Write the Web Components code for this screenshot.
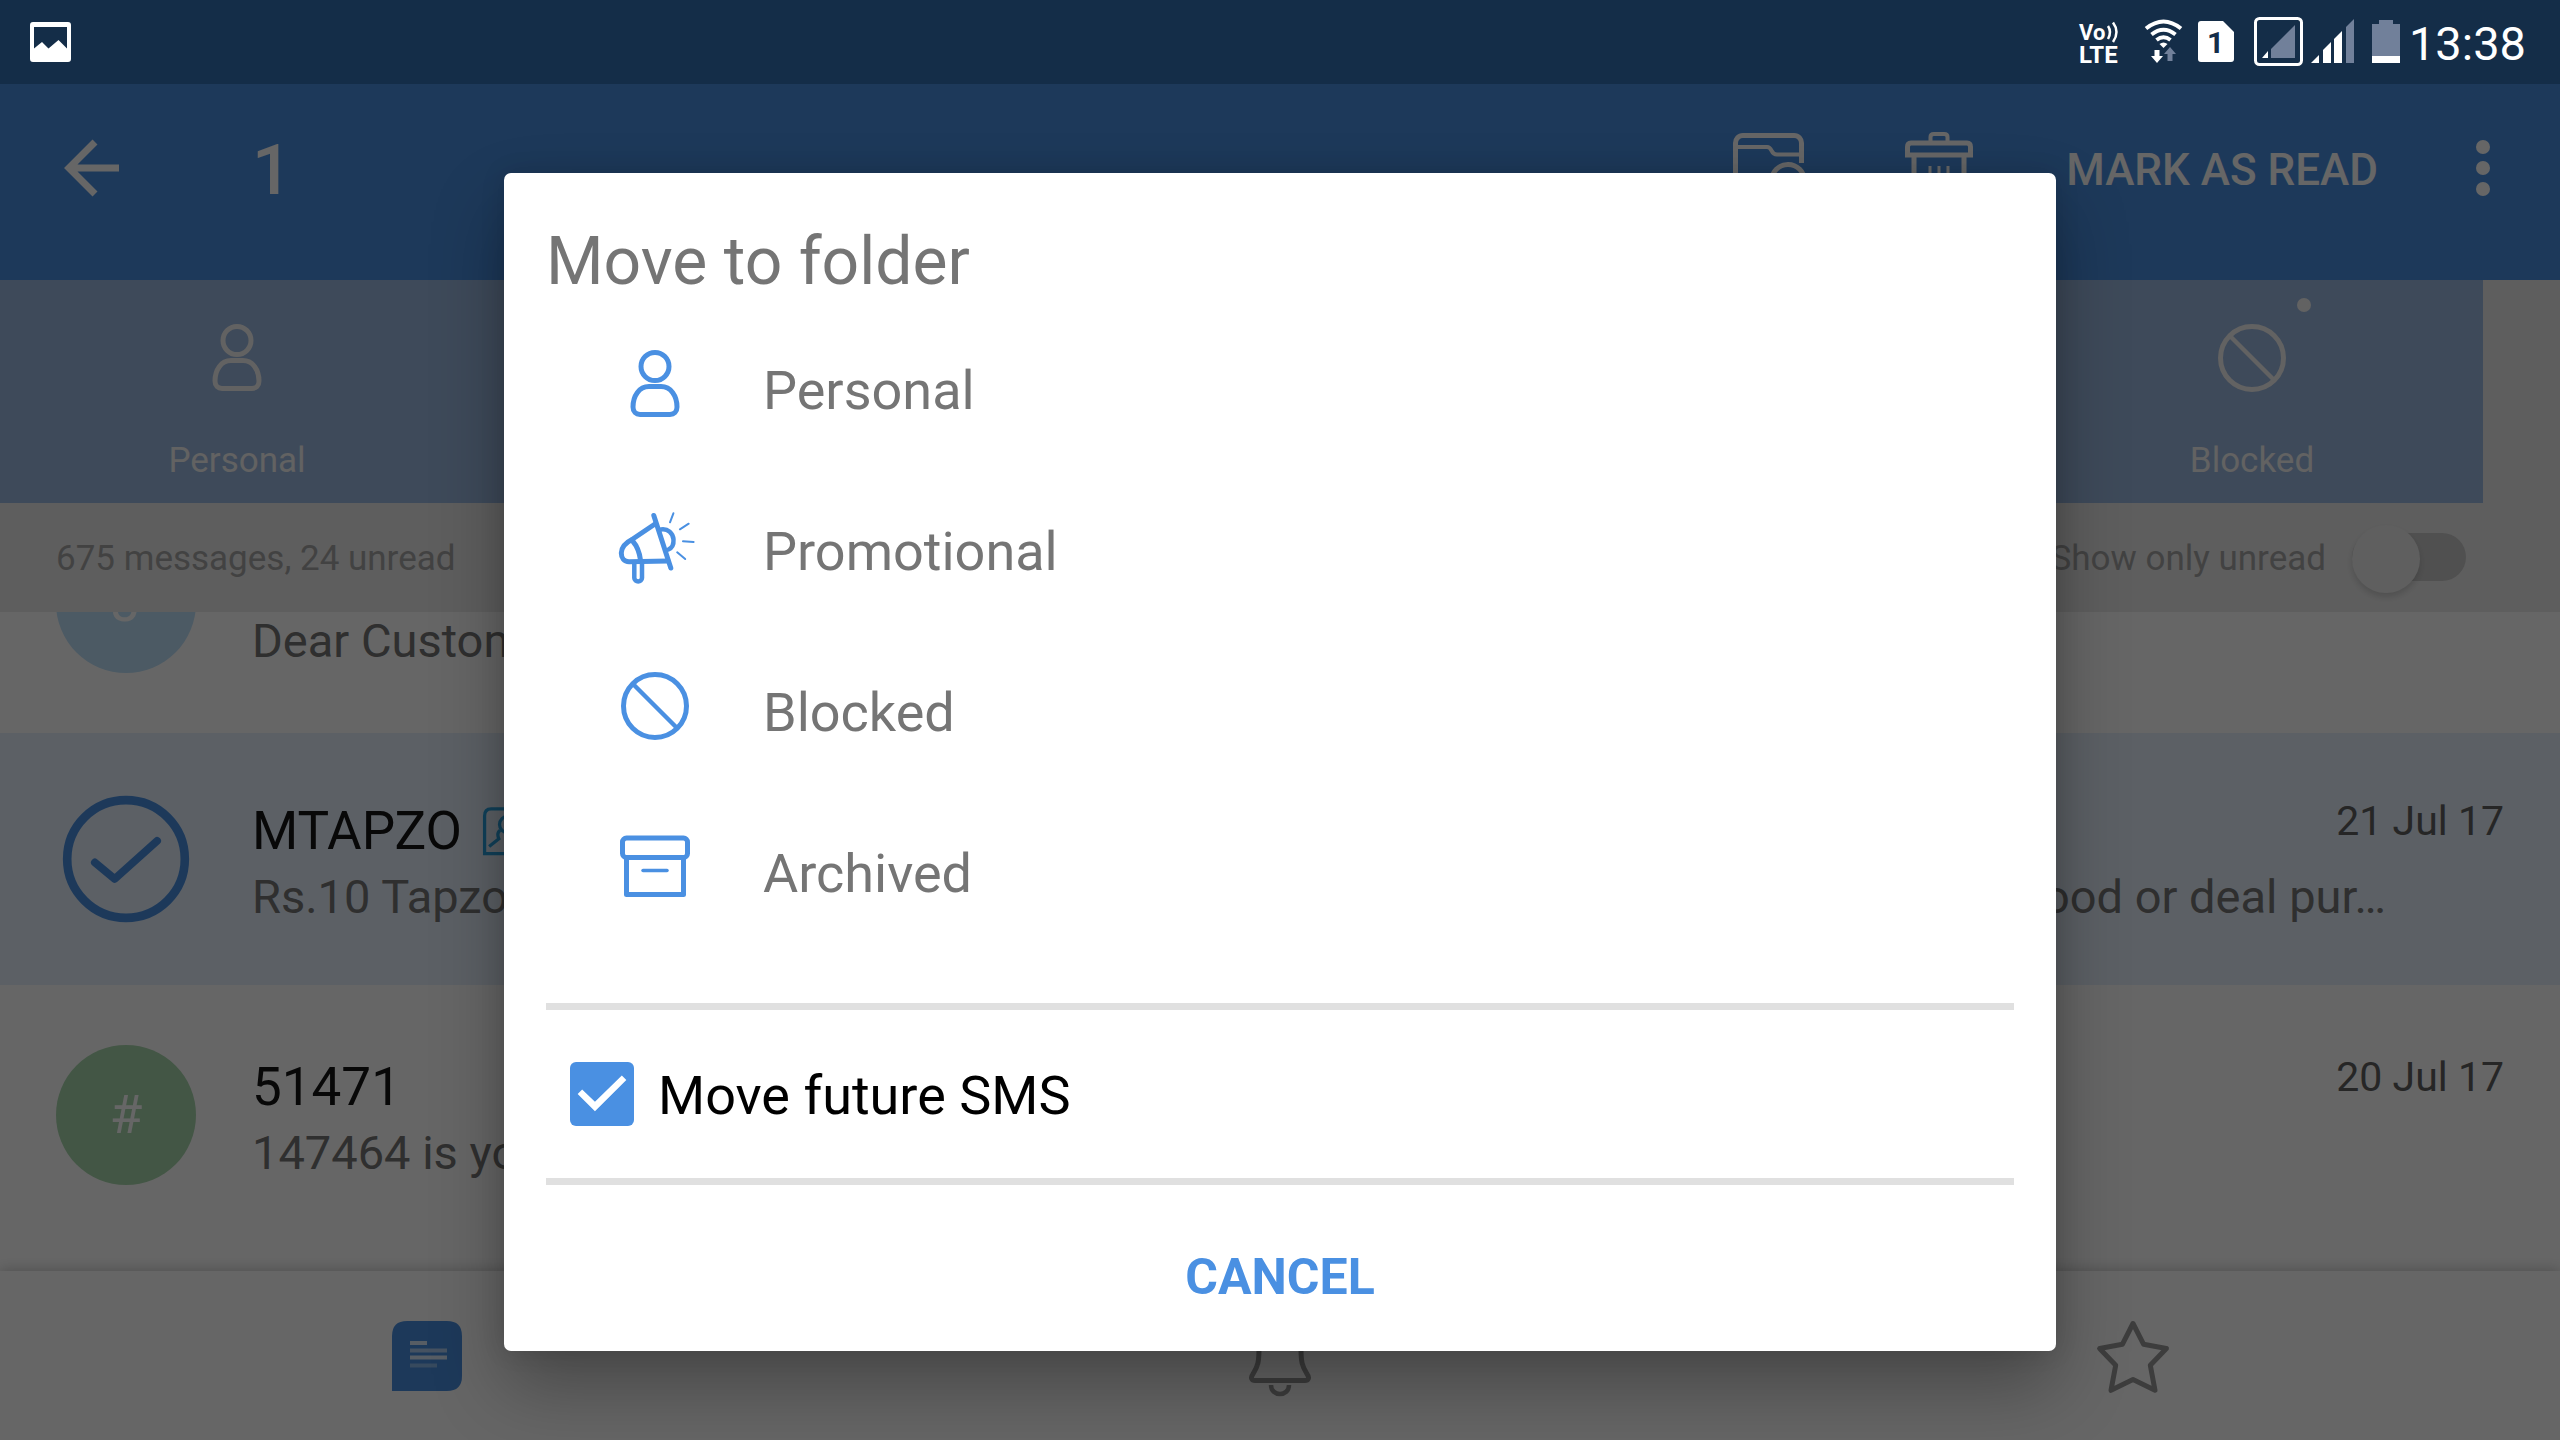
<!DOCTYPE html>
<html lang="en">
<head>
<meta charset="utf-8">
<meta name="viewport" content="width=device-width, initial-scale=1">
<title>Messages</title>
<style>
    html, body {
        height: 100%;
        margin: 0;
    }

    body {
        display: flex;
        flex-direction: column;
        overflow: hidden;
        background: #fff;
        font-family: Roboto, sans-serif;
        --blue: #4a90e2;
        --grey: #757575;
    }
</style>
</head>
<body>
    <status-bar time="13:38"></status-bar>
    <sms-app>
        <selection-bar count="1"></selection-bar>
        <category-tabs>
            <category-tab icon="person">Personal</category-tab>
            <category-tab icon="blocked" unread>Blocked</category-tab>
        </category-tabs>
        <filter-bar>675 messages, 24 unread</filter-bar>
        <message-list>
            <message-row avatar="J" color="#bee1fa">
                <span slot="preview">Dear Customer</span>
            </message-row>
            <message-row selected contact>
                <span slot="name">MTAPZO</span>
                <time slot="date">21 Jul 17</time>
                <span slot="preview">Rs.10 Tapzo</span>
                <span slot="preview">food or deal pur…</span>
            </message-row>
            <message-row avatar="#" color="#a8d7ad">
                <span slot="name">51471</span>
                <time slot="date">20 Jul 17</time>
                <span slot="preview">147464 is your</span>
            </message-row>
        </message-list>
        <bottom-nav></bottom-nav>
        <folder-dialog slot="dialog">
            <span slot="title">Move to folder</span>
            <folder-option icon="person">Personal</folder-option>
            <folder-option icon="megaphone">Promotional</folder-option>
            <folder-option icon="blocked">Blocked</folder-option>
            <folder-option icon="archive">Archived</folder-option>
        </folder-dialog>
    </sms-app>

<script>
/**
 * Icon drawings, each on a 74 x 74 canvas.
 */
const ICONS = {
    back: '<path d="M65 37H16M41 11L15 37L41 63" stroke-width="7"/>',
    person: `
        <circle cx="37" cy="19.5" r="14"/>
        <path d="M31 39.6H43C53 39.6 59 49 59 60C59 65 56 67.4 52 67.4H22C18 67.4 15 65 15 60C15 49 21 39.6 31 39.6Z"/>`,
    blocked: '<circle cx="37" cy="37" r="31.5"/><path d="M15 15L59 59" stroke-width="4.5"/>',
    archive: `
        <rect x="4.5" y="8" width="65" height="19.5" rx="4"/>
        <path d="M8.5 28V64.5H65.5V28" stroke-linejoin="round"/>
        <path d="M25 40.5H49" stroke-width="3.5" stroke-linecap="round"/>`,
    megaphone: `
        <g stroke-linecap="round" stroke-linejoin="round">
            <path d="M35.8 7.5L52.8 60"/>
            <path d="M37 16L14 31.5C7 35 3.5 40 3.3 45C3.3 50 6 53.7 11 53.7L50 53"/>
            <path d="M15 33.5C19 38 21.5 45 22.5 52"/>
            <path d="M16.3 55V70C16.3 74.5 24 74.5 24 70V55" stroke-width="4.5"/>
            <path d="M43 21.5C50 20.5 55 25 55.5 31.5C55.8 36 54 40 50.4 41.5" stroke-width="4.5"/>
            <path d="M55.4 5.3L52 14.3M70.7 15.7L61.9 21.3M65 33.3L75.6 34M59.2 44.3L67.2 51" stroke-width="2"/>
        </g>`,
    folder: `
        <path d="M3.5 74V12C3.5 8 6.5 4.5 11 4.5H62C66.5 4.5 69.5 8 69.5 12V32"/>
        <path d="M4 16H35C41 16 38 23.5 45 23.5H69" stroke-width="4"/>
        <circle cx="56" cy="50" r="16.5"/>`,
    trash: `
        <path d="M28.5 12V6Q28.5 3 32 3H42Q45.5 3 45.5 6V12" stroke-width="4"/>
        <path d="M9 12H65Q68.5 12 68.5 16V24H5.5V16Q5.5 12 9 12Z"/>
        <path d="M12 24V64Q12 70 18 70H56Q62 70 62 64V24"/>
        <path d="M28 35V58M37 35V58M46 35V58" stroke-width="3"/>`,
    check: `
        <circle cx="37" cy="37" r="34" stroke-width="5"/>
        <path d="M19 39L30.5 48.5L55 26.5" stroke-width="4.5" stroke-linecap="round" stroke-linejoin="round"/>`,
    contact: `
        <path d="M4 72V14Q4 3 14 3H72V72Z"/>
        <circle cx="40" cy="27" r="13"/>
        <path d="M11 61L26 49Q22 40 28 36M69 61L54 49Q58 40 52 36"/>`,
    messages: `
        <path d="M2 72V17Q2 2 17 2H57Q72 2 72 17V57Q72 72 57 72Z" fill="currentColor" stroke="none"/>
        <g stroke="#fff" stroke-width="4" opacity=".8">
            <path d="M20 24H37M20 38.5H57"/>
            <path d="M20 31.5H57" opacity=".7"/>
            <path d="M20 46.5H47" opacity=".45"/>
        </g>`,
    bell: `
        <path d="M37 5C23 5 16 15 16 29C16 43 15 47 10 55C7 59 9 61.5 12 61.5H62C65 61.5 67 59 64 55C59 47 58 43 58 29C58 15 51 5 37 5Z"/>
        <path d="M28 66C28 78 46 78 46 66" stroke-width="4.5"/>`,
    star: `
        <path stroke-linejoin="round" d="M37 4.5L47.5 25.2L70.4 29.5L54.3 46.3L59 71.3L37 60.6L15 71.3L19.7 46.3L3.6 29.5L26.5 25.2Z"/>`
};

/**
 * Icon that takes its colour from the text colour.
 */
customElements.define('app-icon', class AppIcon extends HTMLElement {
    constructor() {
        super();
        this.attachShadow({ mode: 'open' });
    }

    connectedCallback() {
        this.shadowRoot.innerHTML = `
            <style>
                :host {
                    display: block;
                    flex: none;
                    width: var(--icon-size, 74px);
                    height: var(--icon-size, 74px);
                }
                svg {
                    display: block;
                    width: 100%;
                    height: 100%;
                    overflow: visible;
                    fill: none;
                    stroke: currentColor;
                    stroke-width: 5;
                }
            </style>
            <svg viewBox="0 0 74 74" aria-hidden="true">${ICONS[this.getAttribute('name')]}</svg>
        `;
    }
});

/**
 * System bar with the notification and signal icons and the clock.
 */
customElements.define('status-bar', class StatusBar extends HTMLElement {
    constructor() {
        super();
        this.attachShadow({ mode: 'open' });
    }

    connectedCallback() {
        this.shadowRoot.innerHTML = `
            <style>
                :host {
                    display: flex;
                    flex: none;
                    align-items: center;
                    height: 84px;
                    padding: 0 34px 0 30px;
                    background: #142d48;
                    color: #fff;
                }
                svg {
                    display: block;
                    height: 84px;
                    fill: currentColor;
                }
                .right {
                    display: flex;
                    align-items: center;
                    margin-left: auto;
                }
                text {
                    font-weight: 700;
                }
                .dim {
                    fill: #71809a;
                }
                .line {
                    fill: none;
                    stroke: currentColor;
                }
                time {
                    padding-top: 4px;
                    font-size: 47px;
                    line-height: 64px;
                }
            </style>
            <svg width="42" viewBox="0 0 42 84">
                <path fill-rule="evenodd" d="M3 22H38Q41 22 41 25V59Q41 62 38 62H3Q0 62 0 59V25Q0 22 3 22ZM4 27V48.5L12 42L18.5 48.5L28.5 40L37 48.5V27Z"/>
            </svg>
            <div class="right">
                <svg width="60" viewBox="0 0 60 84">
                    <text x="6" y="40" font-size="22">Vo</text>
                    <text x="6" y="63" font-size="24">LTE</text>
                    <path class="line" stroke-width="2.5" d="M35 26Q39 32 35 39M40 22.5Q47 32 40 42"/>
                </svg>
                <svg width="60" viewBox="0 0 60 84">
                    <g class="line" stroke-width="4">
                        <path d="M13 28.5Q30.5 14.5 48 28.5"/>
                        <path d="M18.5 34.5Q30.5 25 42.5 34.5"/>
                        <path d="M23.5 40Q30.5 34.5 37.5 40"/>
                    </g>
                    <path d="M26.5 44Q30.5 41 34.5 44L30.5 48Z"/>
                    <path d="M21.5 50H26.5V56H30L24 63L18 56H21.5Z"/>
                    <path class="dim" d="M34.5 61H39.5V54H43L37 47L31 54H34.5Z"/>
                </svg>
                <svg width="50" viewBox="0 0 50 84">
                    <path d="M8 21H30L41 32V59Q41 62 38 62H8Q5 62 5 59V24Q5 21 8 21Z"/>
                    <text x="14" y="53" font-size="30" fill="#142d48">1</text>
                </svg>
                <svg width="64" viewBox="0 0 64 84">
                    <rect class="line" stroke-width="3" x="12.5" y="18.5" width="46" height="46" rx="4"/>
                    <path d="M19 58L25 51V58Z"/>
                    <path class="dim" d="M28 58V49L52 25V58Z"/>
                </svg>
                <svg width="56" viewBox="0 0 56 84">
                    <path d="M4 63L12 55V63ZM16 63V50L24 42V63ZM27 63V39L35 31V63Z"/>
                    <path class="dim" d="M39 63V27L47 19V63Z"/>
                </svg>
                <svg width="46" viewBox="0 0 46 84">
                    <path class="dim" d="M9 24H16V20H30V24H37V56H9Z"/>
                    <path d="M9 56H37V63H9Z"/>
                </svg>
                <time>${this.getAttribute('time')}</time>
            </div>
        `;
    }
});

/**
 * Application screen: the page content and the dimmed layer that holds a dialog.
 */
customElements.define('sms-app', class SmsApp extends HTMLElement {
    constructor() {
        super();
        this.attachShadow({ mode: 'open' });
        this.shadowRoot.innerHTML = `
            <style>
                :host {
                    display: flex;
                    flex: 1;
                    flex-direction: column;
                    min-height: 0;
                    position: relative;
                }
                .scrim {
                    position: absolute;
                    inset: 0;
                    display: flex;
                    align-items: center;
                    justify-content: center;
                    overflow: hidden;
                    background: rgba(0, 0, 0, .6);
                }
            </style>
            <slot></slot>
            <div class="scrim"><slot name="dialog"></slot></div>
        `;
    }
});

/**
 * Top bar shown while messages are selected.
 */
customElements.define('selection-bar', class SelectionBar extends HTMLElement {
    constructor() {
        super();
        this.attachShadow({ mode: 'open' });
    }

    connectedCallback() {
        this.shadowRoot.innerHTML = `
            <style>
                :host {
                    display: flex;
                    flex: none;
                    align-items: center;
                    height: 168px;
                    padding: 0 70px 28px 54px;
                    background: var(--blue);
                    color: #fff;
                }
                button {
                    display: block;
                    padding: 0;
                    border: 0;
                    background: none;
                    color: inherit;
                }
                .count {
                    margin-left: 124px;
                    padding-top: 4px;
                    font-size: 70px;
                    font-weight: 500;
                    line-height: 80px;
                }
                .icons {
                    display: flex;
                    gap: 96px;
                    margin-left: auto;
                }
                .read {
                    margin: 0 98px 0 90px;
                    padding-top: 4px;
                    font: 500 44px/52px Roboto, sans-serif;
                }
                .more {
                    display: grid;
                    gap: 7px;
                }
                .more i {
                    width: 14px;
                    height: 14px;
                    border-radius: 50%;
                    background: currentColor;
                }
            </style>
            <button aria-label="Back"><app-icon name="back"></app-icon></button>
            <span class="count">${this.getAttribute('count')}</span>
            <div class="icons">
                <button aria-label="Move"><app-icon name="folder"></app-icon></button>
                <button aria-label="Delete"><app-icon name="trash"></app-icon></button>
            </div>
            <button class="read">MARK AS READ</button>
            <button class="more" aria-label="More"><i></i><i></i><i></i></button>
        `;
    }
});

/**
 * Strip of category tabs.
 */
customElements.define('category-tabs', class CategoryTabs extends HTMLElement {
    constructor() {
        super();
        this.attachShadow({ mode: 'open' });
        this.shadowRoot.innerHTML = `
            <style>
                :host {
                    display: flex;
                    flex: none;
                    padding-right: 77px;
                    background: #ebebeb;
                }
                nav {
                    display: flex;
                    flex: 1;
                    justify-content: space-between;
                    background: #9bb8e0;
                }
                ::slotted(category-tab) {
                    min-width: 462px;
                }
                ::slotted(category-tab:first-child) {
                    min-width: 474px;
                }
            </style>
            <nav><slot></slot></nav>
        `;
    }
});

/**
 * One category tab, with a dot when it has unread messages.
 */
customElements.define('category-tab', class CategoryTab extends HTMLElement {
    constructor() {
        super();
        this.attachShadow({ mode: 'open' });
    }

    connectedCallback() {
        this.shadowRoot.innerHTML = `
            <style>
                :host {
                    display: block;
                }
                a {
                    display: flex;
                    flex-direction: column;
                    align-items: center;
                    gap: 46px;
                    padding: 41px 0 22px;
                    color: #f4f4f4;
                    font-size: 35px;
                    line-height: 40px;
                    text-decoration: none;
                }
                .icon {
                    position: relative;
                }
                .dot {
                    position: absolute;
                    top: -23px;
                    right: -22px;
                    width: 14px;
                    height: 14px;
                    border-radius: 50%;
                    background: currentColor;
                }
            </style>
            <a href="#">
                <span class="icon">
                    <app-icon name="${this.getAttribute('icon')}"></app-icon>
                    ${this.hasAttribute('unread') ? '<i class="dot"></i>' : ''}
                </span>
                <slot></slot>
            </a>
        `;
    }
});

/**
 * Message totals and the unread switch.
 */
customElements.define('filter-bar', class FilterBar extends HTMLElement {
    constructor() {
        super();
        this.attachShadow({ mode: 'open' });
        this.shadowRoot.innerHTML = `
            <style>
                :host {
                    display: flex;
                    flex: none;
                    align-items: center;
                    justify-content: space-between;
                    height: 107px;
                    padding: 2px 94px 0 56px;
                    background: #ebebeb;
                    color: #a6a6a6;
                    font-size: 35px;
                    line-height: 40px;
                }
                label {
                    display: flex;
                    align-items: center;
                    gap: 26px;
                }
                input {
                    appearance: none;
                    position: relative;
                    width: 114px;
                    height: 48px;
                    margin: 0 0 4px;
                    border-radius: 24px;
                    background: #c8c8c8;
                }
                input::before {
                    content: "";
                    position: absolute;
                    top: -8px;
                    left: 0;
                    width: 68px;
                    height: 68px;
                    border-radius: 50%;
                    background: #ededed;
                    box-shadow: 0 4px 6px rgba(0, 0, 0, .15);
                }
                input:checked::before {
                    left: auto;
                    right: 0;
                }
            </style>
            <slot></slot>
            <label>Show only unread <input type="checkbox" role="switch"></label>
        `;
    }
});

/**
 * Scrolled list of messages, resting at its end.
 */
customElements.define('message-list', class MessageList extends HTMLElement {
    constructor() {
        super();
        this.attachShadow({ mode: 'open' });
        this.shadowRoot.innerHTML = `
            <style>
                :host {
                    display: flex;
                    flex: 1;
                    flex-direction: column;
                    justify-content: flex-end;
                    gap: 4px;
                    min-height: 0;
                    padding-bottom: 30px;
                    overflow: hidden;
                    background: #fff;
                }
            </style>
            <slot></slot>
        `;
    }
});

/**
 * Message row with avatar, sender, date and preview.
 */
customElements.define('message-row', class MessageRow extends HTMLElement {
    constructor() {
        super();
        this.attachShadow({ mode: 'open' });
    }

    connectedCallback() {
        const selected = this.hasAttribute('selected');
        this.shadowRoot.innerHTML = `
            <style>
                :host {
                    display: flex;
                    flex: none;
                    align-items: center;
                    gap: 56px;
                    height: 252px;
                    padding: 0 56px;
                    background: #fff;
                }
                :host([selected]) {
                    background: #e5f0fd;
                }
                .avatar {
                    display: grid;
                    flex: none;
                    place-items: center;
                    width: 140px;
                    height: 140px;
                    border-radius: 50%;
                    background: ${this.getAttribute('color') || 'none'};
                    color: #fff;
                    font-size: 53px;
                    line-height: 64px;
                }
                .avatar app-icon {
                    --icon-size: 128px;
                    color: var(--blue);
                }
                .body {
                    flex: 1;
                    min-width: 0;
                    padding-top: 6px;
                }
                .top {
                    display: flex;
                    align-items: center;
                    gap: 20px;
                    height: 70px;
                    color: #141414;
                    font-size: 53px;
                    line-height: 64px;
                }
                .top app-icon {
                    --icon-size: 48px;
                    color: #2ba3e0;
                }
                .date {
                    margin: 0 0 20px auto;
                    color: #606060;
                    font-size: 41px;
                    line-height: 48px;
                }
                .preview {
                    display: flex;
                    justify-content: space-between;
                    margin-right: 118px;
                    color: var(--grey);
                    font-size: 47px;
                    line-height: 62px;
                    white-space: nowrap;
                }
            </style>
            <div class="avatar">${selected ? '<app-icon name="check"></app-icon>' : this.getAttribute('avatar')}</div>
            <div class="body">
                <div class="top">
                    <slot name="name"></slot>
                    ${this.hasAttribute('contact') ? '<app-icon name="contact"></app-icon>' : ''}
                    <span class="date"><slot name="date"></slot></span>
                </div>
                <div class="preview"><slot name="preview"></slot></div>
            </div>
        `;
    }
});

/**
 * Bottom navigation.
 */
customElements.define('bottom-nav', class BottomNav extends HTMLElement {
    constructor() {
        super();
        this.attachShadow({ mode: 'open' });
        this.shadowRoot.innerHTML = `
            <style>
                :host {
                    display: block;
                    flex: none;
                    position: relative;
                    background: #fff;
                    box-shadow: 0 -2px 12px rgba(0, 0, 0, .2);
                }
                nav {
                    display: grid;
                    grid-template-columns: repeat(3, 1fr);
                    justify-items: center;
                    padding: 48px 0 47px;
                }
                a {
                    color: #999;
                }
                a.active {
                    color: var(--blue);
                }
            </style>
            <nav>
                <a class="active" href="#" aria-label="Messages"><app-icon name="messages"></app-icon></a>
                <a href="#" aria-label="Reminders"><app-icon name="bell"></app-icon></a>
                <a href="#" aria-label="Starred"><app-icon name="star"></app-icon></a>
            </nav>
        `;
    }
});

/**
 * Folder choice in the dialog.
 */
customElements.define('folder-option', class FolderOption extends HTMLElement {
    constructor() {
        super();
        this.attachShadow({ mode: 'open' });
    }

    connectedCallback() {
        this.shadowRoot.innerHTML = `
            <style>
                :host {
                    display: block;
                }
                button {
                    display: flex;
                    align-items: center;
                    gap: 71px;
                    width: 100%;
                    height: 161px;
                    padding: 0 0 0 72px;
                    border: 0;
                    background: none;
                    color: var(--grey);
                    font: 54px/64px Roboto, sans-serif;
                    text-align: left;
                }
                app-icon {
                    margin-bottom: 14px;
                    color: var(--blue);
                }
            </style>
            <button><app-icon name="${this.getAttribute('icon')}"></app-icon><slot></slot></button>
        `;
    }
});

/**
 * Dialog that asks for the target folder.
 */
customElements.define('folder-dialog', class FolderDialog extends HTMLElement {
    /**
     * Style tag with all CSS for the HTML elements.
     */
    _style = `
        <style>
            :host {
                display: block;
                box-sizing: border-box;
                width: calc(100% - 1008px);
                padding: 49px 42px 46px;
                border-radius: 7px;
                background: #fff;
                box-shadow: 0 36px 72px rgba(0, 0, 0, .3), 0 0 24px rgba(0, 0, 0, .12);
            }
            h1 {
                margin: 0 0 8px;
                color: var(--grey);
                font-size: 66px;
                font-weight: 400;
                line-height: 80px;
            }
            .future {
                display: flex;
                align-items: center;
                gap: 24px;
                height: 168px;
                margin-top: 49px;
                padding-left: 24px;
                border: solid #e0e0e0;
                border-width: 7px 0;
                color: #000;
                font-size: 54px;
                line-height: 64px;
            }
            .future span {
                padding-top: 4px;
            }
            input {
                appearance: none;
                width: 64px;
                height: 64px;
                margin: 0;
                border: 5px solid var(--grey);
                border-radius: 6px;
            }
            input:checked {
                border: 0;
                background: var(--blue);
            }
            input:checked::before {
                content: "";
                display: block;
                height: 64px;
                background: #fff;
                clip-path: polygon(12% 50%, 19% 43%, 39% 62%, 81% 21%, 88% 28%, 39% 77%);
            }
            .cancel {
                display: block;
                margin: 64px auto 0;
                padding: 0;
                border: 0;
                background: none;
                color: var(--blue);
                font: 700 50px/56px Roboto, sans-serif;
            }
        </style>
    `;

    /**
     * HTML elements that will be rendered.
     */
    _html = `
        <h1><slot name="title"></slot></h1>
        <slot></slot>
        <label class="future"><input type="checkbox" checked><span>Move future SMS</span></label>
        <button class="cancel">CANCEL</button>
    `;

    constructor() {
        super();
        this.attachShadow({ mode: 'open' });
        this.shadowRoot.innerHTML = `${this._style}${this._html}`;
        this.shadowRoot.querySelector('.cancel').addEventListener('click', this._cancelOnClick.bind(this));
    }

    /**
     * Event triggered when the component is attached to DOM.
     */
    connectedCallback() {
        this.setAttribute('role', 'dialog');
    }

    /**
     * Closes the dialog.
     */
    _cancelOnClick() {
        this.remove();
    }
});
</script>
</body>
</html>
